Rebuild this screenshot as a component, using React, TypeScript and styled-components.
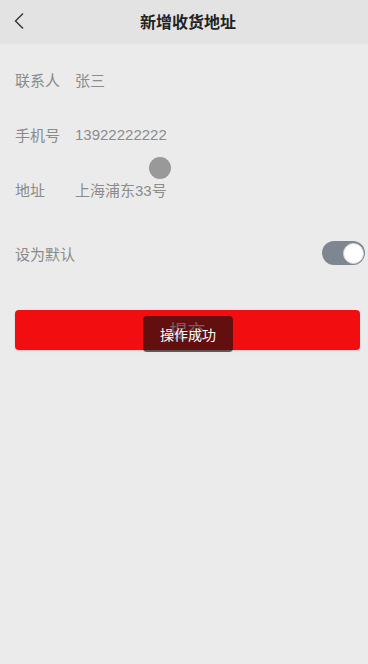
import React from "react";
import styled, { createGlobalStyle } from "styled-components";

const GlobalStyle = createGlobalStyle`
  html, body {
    margin: 0;
    padding: 0;
    background: #ebebeb;
    font-family: "Liberation Sans", "Noto Sans CJK SC", sans-serif;
  }
`;

type Field = { label: string; value: string };

const fields: Field[] = [
  { label: "联系人", value: "张三" },
  { label: "手机号", value: "13922222222" },
  { label: "地址", value: "上海浦东33号" },
];

export default function App() {
  const [isDefault, setIsDefault] = React.useState(true);
  return (
    <Page>
      <GlobalStyle />
      <Header>
        <BackButton aria-label="返回">
          <svg width="12" height="18" viewBox="0 0 12 18" fill="none">
            <path d="M10 1.5L2.5 9L10 16.5" stroke="#333" strokeWidth="1.4" />
          </svg>
        </BackButton>
        <Title>新增收货地址</Title>
      </Header>

      <Form>
        {fields.map((f) => (
          <Row key={f.label}>
            <Label>{f.label}</Label>
            <Value>{f.value}</Value>
          </Row>
        ))}
        <SwitchRow>
          <Label>设为默认</Label>
          <Switch $on={isDefault} onClick={() => setIsDefault(!isDefault)}>
            <Knob $on={isDefault} />
          </Switch>
        </SwitchRow>
        <SubmitWrap>
          <SubmitButton>提交</SubmitButton>
          <Toast>操作成功</Toast>
        </SubmitWrap>
      </Form>

      <TouchDot />
    </Page>
  );
}

const Page = styled.div`
  position: relative;
  min-height: 664px;
  background: #ebebeb;
`;

const Header = styled.div`
  position: relative;
  height: 44px;
  display: flex;
  align-items: center;
  justify-content: center;
  background: #e3e3e3;
`;

const BackButton = styled.div`
  position: absolute;
  left: 13px;
  top: 12px;
  display: flex;
`;

const Title = styled.div`
  font-size: 16px;
  font-weight: bold;
  color: #222;
  margin-top: -2px;
  padding-left: 8px;
`;

const Form = styled.div`
  display: flex;
  flex-direction: column;
  padding-top: 8px;
`;

const Row = styled.div`
  height: 55px;
  display: flex;
  align-items: center;
  padding-left: 15px;
`;

const SwitchRow = styled.div`
  height: 72px;
  display: flex;
  align-items: center;
  justify-content: space-between;
  padding: 0 3px 0 15px;
`;

const Label = styled.span`
  width: 60px;
  font-size: 15px;
  color: #8a8a8a;
`;

const Value = styled.span`
  font-size: 15px;
  color: #8c8c8c;
`;

const Switch = styled.div<{ $on: boolean }>`
  width: 43px;
  height: 24px;
  border-radius: 12px;
  background: ${(p) => (p.$on ? "#7e878f" : "#ccc")};
  display: flex;
  align-items: center;
  justify-content: ${(p) => (p.$on ? "flex-end" : "flex-start")};
  padding: 0 1px;
  box-sizing: border-box;
`;

const Knob = styled.div<{ $on: boolean }>`
  width: 21px;
  height: 21px;
  border-radius: 50%;
  background: #fff;
  border: 1px solid #d0d4d8;
  box-sizing: border-box;
`;

const SubmitWrap = styled.div`
  position: relative;
  margin: 21px 8px 0 15px;
`;

const SubmitButton = styled.div`
  height: 40px;
  border-radius: 4px;
  background: #f20e10;
  color: #fff;
  font-size: 18px;
  display: flex;
  align-items: center;
  justify-content: center;
  box-shadow: 0 1px 2px rgba(0, 0, 0, 0.15);
`;

const Toast = styled.div`
  position: absolute;
  left: 128px;
  top: 6px;
  width: 90px;
  height: 36px;
  border-radius: 4px;
  background: rgba(20, 16, 16, 0.64);
  color: #fff;
  font-size: 14px;
  display: flex;
  align-items: center;
  justify-content: center;
`;

const TouchDot = styled.div`
  position: absolute;
  left: 149px;
  top: 157px;
  width: 22px;
  height: 22px;
  border-radius: 50%;
  background: #999;
  filter: blur(0.6px);
`;
